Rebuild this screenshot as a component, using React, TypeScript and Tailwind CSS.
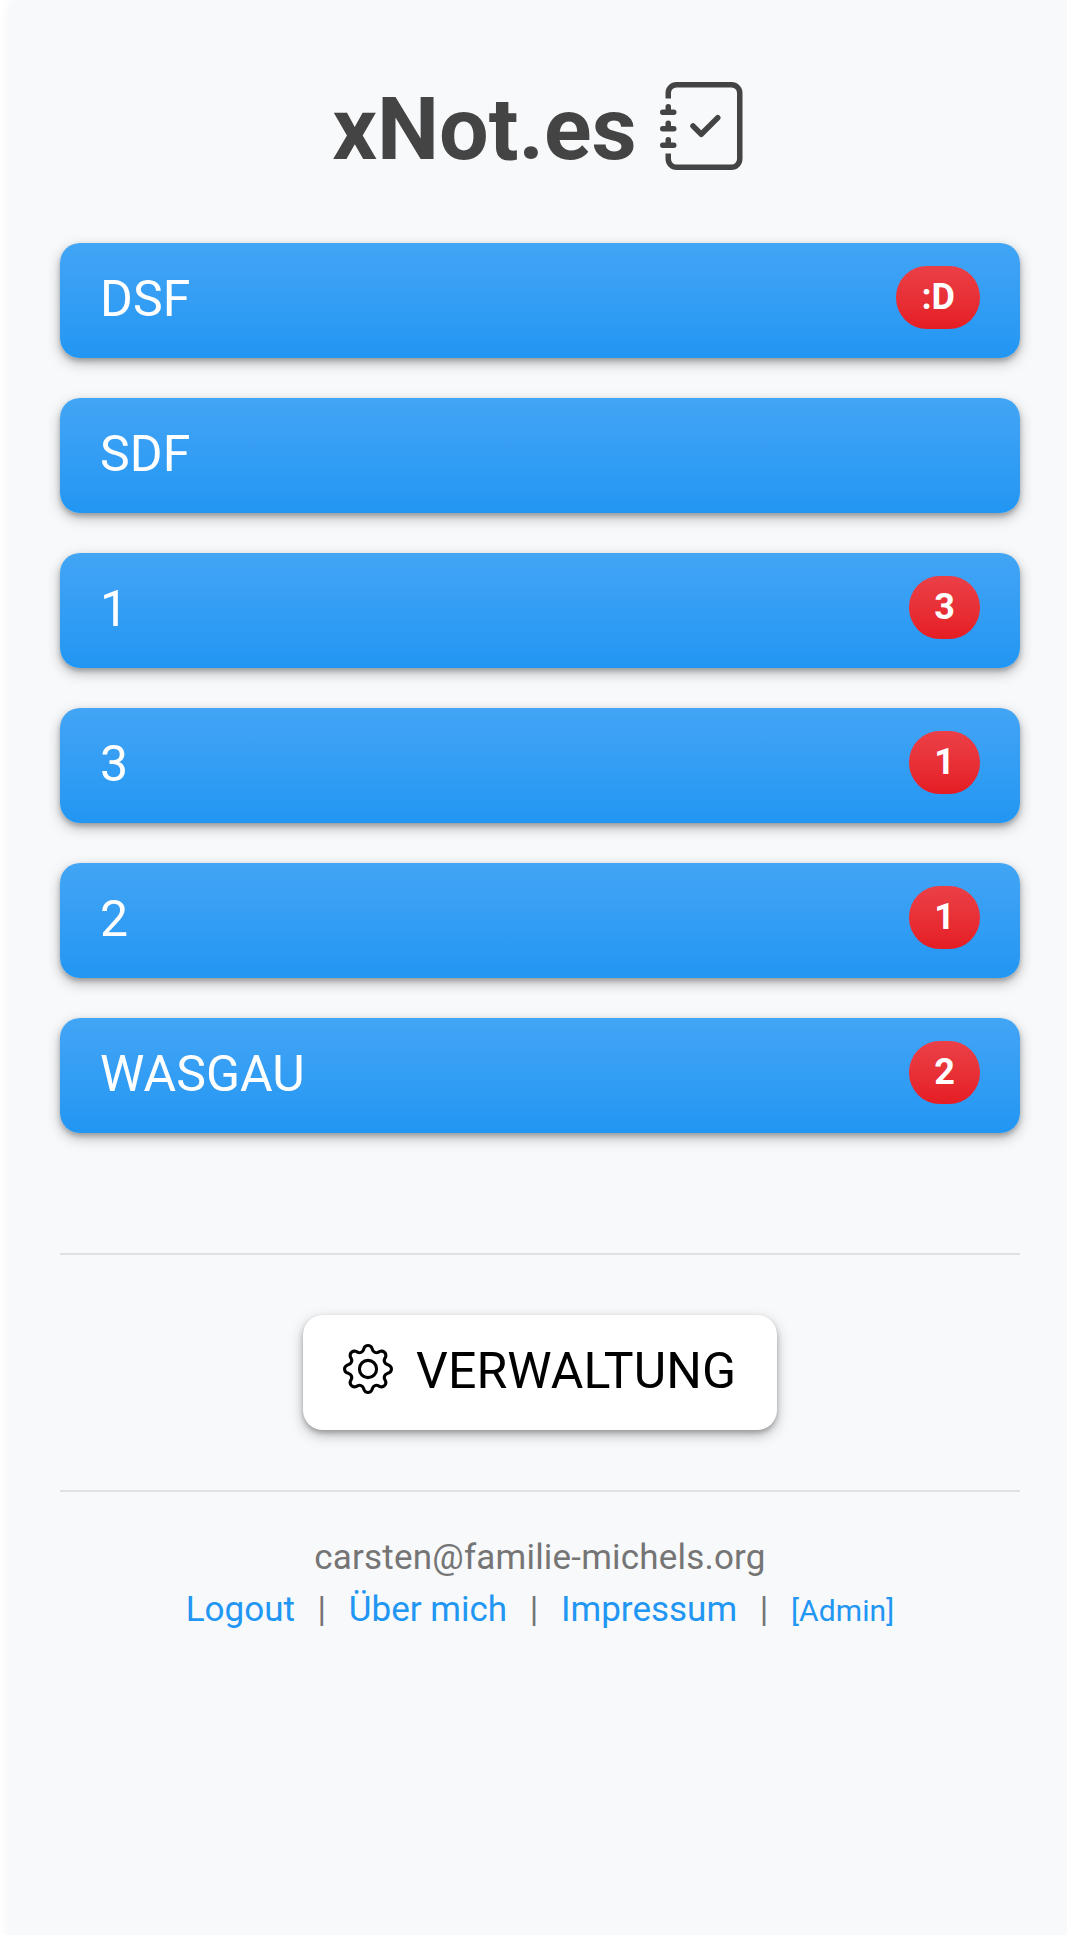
import React from "react";
import { BsGear, BsJournalCheck } from "react-icons/bs";

type Note = {
  title: string;
  badge?: string;
};

const notes: Note[] = [
  { title: "DSF", badge: ":D" },
  { title: "SDF" },
  { title: "1", badge: "3" },
  { title: "3", badge: "1" },
  { title: "2", badge: "1" },
  { title: "WASGAU", badge: "2" },
];

const NoteButton: React.FC<{ note: Note }> = ({ note }) => (
  <button className="flex h-[115px] w-full items-start justify-between rounded-[20px] bg-linear-to-b from-[#42a5f5] to-[#2196f3] px-10 text-left text-white shadow-[0_5px_14px_rgba(0,0,0,0.26),0_3px_5px_rgba(0,0,0,0.22)]">
    <span className="pt-[18px] text-[50px] leading-[76px] tracking-[0.1px]">{note.title}</span>
    {note.badge && (
      <span className="mt-[23px] h-[63px] rounded-[31px] bg-linear-to-b from-[#eb3f47] to-[#e51c23] px-[25px] text-[36px] leading-[63px] font-bold">
        {note.badge}
      </span>
    )}
  </button>
);

const Divider: React.FC = () => <span className="px-[22.7px]">|</span>;

export default function App() {
  return (
    <div className="h-[1935px] overflow-hidden bg-white pl-[9px] font-['Roboto',sans-serif]">
      <main className="-mt-2 h-[1960px] rounded-tl-[20px] bg-[#f8f9fb] pt-2 pr-[47px] pl-[51px] shadow-[0_0_14px_rgba(0,0,0,0.05)]">
        <header className="flex h-[243px] justify-center gap-[23px] pt-[82px] text-[#444]">
          <h1 className="text-[88px] leading-[94px] font-bold">xNot.es</h1>
          <BsJournalCheck className="size-[88px]" />
        </header>

        <div className="flex flex-col gap-10">
          {notes.map((note) => (
            <NoteButton key={note.title} note={note} />
          ))}
        </div>

        <hr className="mt-[120px] border-t-2 border-[#e0e1e3]" />

        <div className="flex justify-center py-[60px]">
          <button className="flex h-[115px] w-[474px] items-start rounded-[20px] bg-white pl-10 text-black shadow-[0_5px_14px_rgba(0,0,0,0.26),0_3px_5px_rgba(0,0,0,0.22)]">
            <BsGear className="mt-[29px] size-[50px]" />
            <span className="ml-[23px] pt-[18px] text-[50px] leading-[76px] tracking-[0.1px]">VERWALTUNG</span>
          </button>
        </div>

        <hr className="border-t-2 border-[#e0e1e3]" />

        <footer className="pt-[40px] text-center text-[35px] leading-[52px] text-[#757575]">
          <div className="tracking-[0.2px]">carsten@familie-michels.org</div>
          <div className="flex items-baseline justify-center">
            <a className="text-[#2196f3]">Logout</a>
            <Divider />
            <a className="text-[#2196f3]">Über mich</a>
            <Divider />
            <a className="text-[#2196f3]">Impressum</a>
            <Divider />
            <a className="text-[30px] tracking-[0.1px] text-[#2196f3]">[Admin]</a>
          </div>
        </footer>
      </main>
    </div>
  );
}
